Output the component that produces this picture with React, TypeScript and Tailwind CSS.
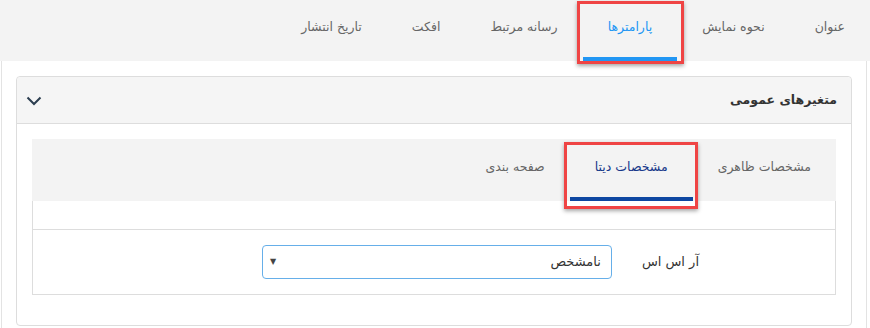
import React from "react";

const topTabs = ["عنوان", "نحوه نمایش", "پارامترها", "رسانه مرتبط", "افکت", "تاریخ انتشار"];
const innerTabs = ["مشخصات ظاهری", "مشخصات دیتا", "صفحه بندی"];

export default function App() {
  return (
    <div
      dir="rtl"
      className="w-[870px] h-[328px] overflow-hidden bg-white text-[13px]"
      style={{ fontFamily: '"DejaVu Sans", sans-serif' }}
    >
      {/* top nav */}
      <div className="h-[61px] bg-[#f3f3f3] flex text-[12.5px]">
        {topTabs.map((t, i) => {
          const active = i === 2;
          return (
            <div key={t} className="relative h-[61px] flex flex-col">
              <div className={`px-[25px] pt-[18px] h-[57px] whitespace-nowrap ${active ? "text-[#2196f3]" : "text-[#666]"}`}>{t}</div>
              {active && <div className="h-[4px] bg-[#2196f3]" />}
              {active && (
                <div className="absolute left-[-6px] right-[-7px] top-[1px] bottom-[-3px] border-[3px] border-[#ef4444] shadow-[0_2px_4px_rgba(0,0,0,0.35)]" />
              )}
            </div>
          );
        })}
      </div>

      {/* outer area */}
      <div className="ml-[1px] mr-[3px] border-x border-[#e3e3e3] px-[14px] pt-[15px] h-[267px]">
        <div className="border border-[#dddddd] rounded-[4px]">
          {/* panel header */}
          <div className="h-[47px] bg-[#f5f5f5] border-b border-[#dddddd] rounded-t-[4px] flex items-center justify-between pr-[14px] pl-[9px]">
            <div className="font-bold text-[#333] text-[12.5px]">متغیرهای عمومی</div>
            <svg width="16" height="10" viewBox="0 0 16 10" className="mt-[2px]">
              <path d="M1.5 1.5 L8 8 L14.5 1.5" fill="none" stroke="#2c3e50" strokeWidth="2" />
            </svg>
          </div>
          {/* panel body */}
          <div className="px-[15px] pt-[15px] pb-[30px]">
            <div className="h-[62px] bg-[#f3f3f3] flex text-[12.5px]">
              {innerTabs.map((t, i) => {
                const active = i === 1;
                return (
                  <div key={t} className="relative h-[62px] flex flex-col">
                    <div className={`px-[25px] pt-[19px] h-[58px] whitespace-nowrap ${active ? "text-[#17398a] font-medium" : "text-[#666]"}`}>{t}</div>
                    {active && <div className="h-[4px] bg-[#0d47a1]" />}
                    {active && (
                      <div className="absolute left-[-6px] right-[-5px] top-[3px] bottom-[-8px] border-[3px] border-[#ef4444] shadow-[0_2px_4px_rgba(0,0,0,0.35)]" />
                    )}
                  </div>
                );
              })}
            </div>
            <div className="border-x border-b border-[#dddddd]">
              <div className="h-[29px] border-b border-[#dddddd]" />
              <div className="h-[64px] flex items-center">
                <div className="mr-[136px] text-[#333] whitespace-nowrap">آر اس اس</div>
                <div className="mr-[30px] w-[350px] h-[34px] border border-[#66afe9] rounded-[4px] flex items-center justify-between pr-[10px] pl-[7px]">
                  <span className="text-[#333]">نامشخص</span>
                  <span className="text-[8px] text-[#444]">▼</span>
                </div>
              </div>
            </div>
          </div>
        </div>
      </div>
    </div>
  );
}
